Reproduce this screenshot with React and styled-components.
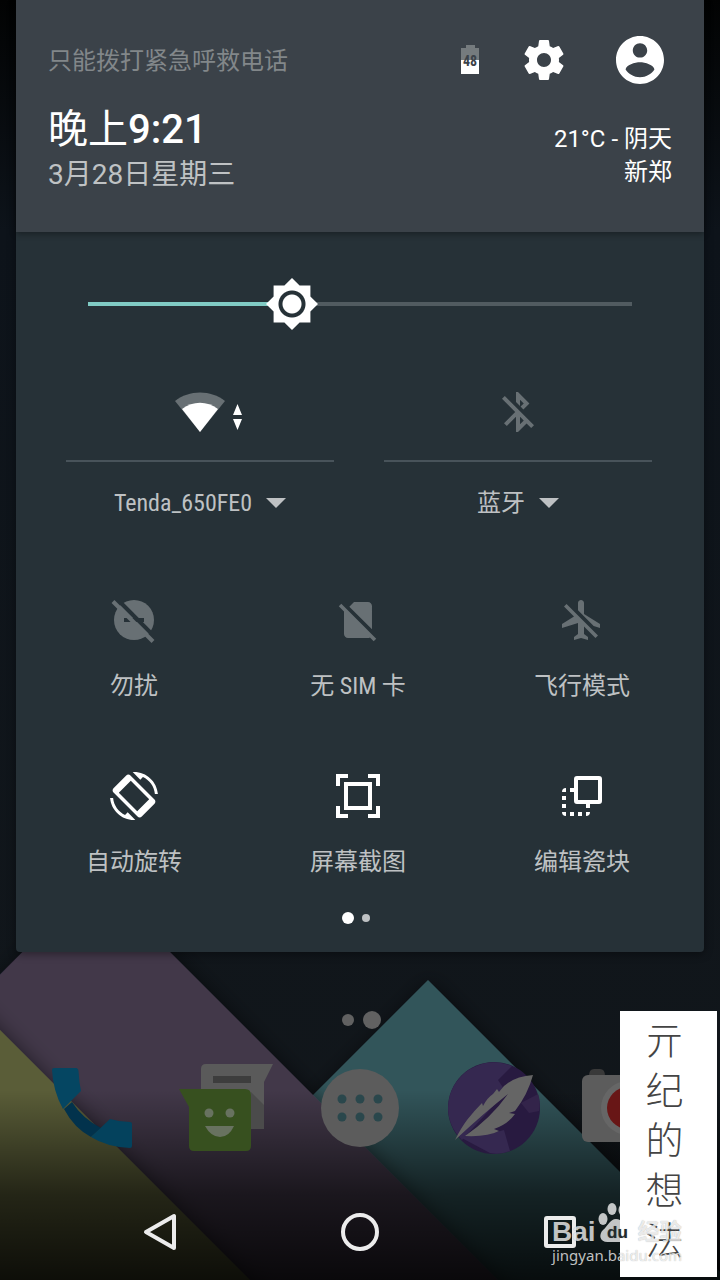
import React, { useState } from 'react';
import styled, { createGlobalStyle } from 'styled-components';

const GlobalStyle = createGlobalStyle`
  * {
    box-sizing: border-box;
  }

  body {
    margin: 0;
    background: #0b1014;
    font-family: Roboto, 'Noto Sans CJK SC', sans-serif;
    color: #fff;
  }

  button, input {
    font: inherit;
    color: inherit;
  }

  svg {
    display: block;
  }
`;

const Screen = styled.div`
  position: relative;
  display: flex;
  flex-direction: column;
  min-height: 100vh;
  overflow: hidden;
  isolation: isolate;
`;

const Wallpaper = styled.svg`
  position: absolute;
  inset: 0;
  z-index: -1;
  width: 100%;
  height: 100%;
`;

const IconButton = styled.button`
  display: flex;
  align-items: center;
  justify-content: center;
  padding: 0;
  border: 0;
  background: none;
  cursor: pointer;
`;

const Panel = styled.section`
  margin: 0 16px;
  background: #263137;
  border-radius: 0 0 4px 4px;
  box-shadow: 0 2px 8px rgba(0, 0, 0, 0.4);
`;

const Header = styled.header`
  position: relative;
  height: 232px;
  padding: 36px 32px 0;
  background: #3b4249;
  box-shadow: 0 2px 6px rgba(0, 0, 0, 0.35);
`;

const StatusRow = styled.div`
  display: flex;
  align-items: center;
  padding-right: 8px;
`;

const Carrier = styled.span`
  flex: 1;
  padding-top: 2px;
  font-size: 24px;
  line-height: 32px;
  color: #82878a;
`;

const StatusIcons = styled.div`
  display: flex;
  align-items: center;
  gap: 48px;
`;

const Battery = styled.svg`
  margin-right: -7px;
  font-family: 'Roboto Condensed', 'Liberation Sans Narrow', Roboto, sans-serif;
`;

const ClockRow = styled.div`
  display: flex;
  justify-content: space-between;
  margin-top: 22px;
`;

const Time = styled.div`
  font-size: 40px;
  font-weight: 500;
  line-height: 48px;

  span {
    font-weight: 400;
  }
`;

const DateText = styled.div`
  font-size: 28px;
  line-height: 42px;
  color: #bfc2c4;
`;

const Weather = styled.div`
  padding-top: 17px;
  font-size: 24px;
  line-height: 33px;
  text-align: right;
`;

const Brightness = styled.input`
  appearance: none;
  display: block;
  width: calc(100% - 92px);
  height: 52px;
  margin: 46px 46px 0;
  background: linear-gradient(to right, #80cbc4 ${props => props.$level}%, #515b60 ${props => props.$level}%)
    center / calc(100% - 52px) 4px no-repeat;
  cursor: pointer;

  &::-webkit-slider-thumb {
    appearance: none;
    width: 52px;
    height: 52px;
    background: radial-gradient(circle, #fff 9px, #263137 10px, #263137 13px, #fff 14px);
    clip-path: polygon(
      50% 0, 64.6% 14.6%, 85.4% 14.6%, 85.4% 35.4%, 100% 50%, 85.4% 64.6%, 85.4% 85.4%, 64.6% 85.4%,
      50% 100%, 35.4% 85.4%, 14.6% 85.4%, 14.6% 64.6%, 0 50%, 14.6% 35.4%, 14.6% 14.6%, 35.4% 14.6%
    );
  }
`;

const WideTiles = styled.div`
  display: grid;
  grid-template-columns: 1fr 1fr;
  gap: 50px;
  padding: 58px 52px 0 50px;
`;

const WideTile = styled.div`
  display: flex;
  flex-direction: column;
`;

const Toggle = styled(IconButton)`
  height: 74px;
  padding-bottom: 24px;
  border-bottom: 2px solid #48535a;
  color: ${props => (props.$on ? '#fff' : '#687074')};
`;

const DetailButton = styled(IconButton)`
  gap: 14px;
  height: 82px;
  font-family: 'Roboto Condensed', 'Liberation Sans Narrow', Roboto, 'Noto Sans CJK SC', sans-serif;
  font-size: 24px;
  line-height: 34px;
  color: #bec1c3;
`;

const TileGrid = styled.div`
  display: grid;
  grid-template-columns: repeat(3, 1fr);
  row-gap: 68px;
  padding: 52px 10px 0 6px;
`;

const Tile = styled(IconButton)`
  flex-direction: column;
  gap: 24px;
  font-family: 'Roboto Condensed', 'Liberation Sans Narrow', Roboto, 'Noto Sans CJK SC', sans-serif;
  font-size: 24px;
  line-height: 36px;
  color: #bec1c3;

  svg {
    color: ${props => (props.$on ? '#fff' : '#687074')};
  }
`;

const Pager = styled.div`
  display: flex;
  align-items: center;
  justify-content: center;
  gap: 8px;
  height: 12px;
  margin: 32px 8px 28px 0;
`;

const Dot = styled.span`
  width: ${props => props.$size}px;
  height: ${props => props.$size}px;
  border-radius: 50%;
  background: ${props => props.$color};
`;

const HomePager = styled(Pager)`
  gap: 9px;
  height: 18px;
  margin: 59px 0 31px;
  padding-left: 3px;
`;

const Dock = styled.nav`
  display: grid;
  grid-template-columns: repeat(5, 1fr);
  padding: 0 25px;
`;

const NavBar = styled.nav`
  display: grid;
  grid-template-columns: repeat(3, 1fr);
  height: 96px;
  margin-top: 28px;
  padding: 0 60px;
`;

const Note = styled.div`
  position: absolute;
  right: 3px;
  bottom: 3px;
  width: 97px;
  height: 266px;
  padding: 2px 8px 0 0;
  background: #fff;
  color: #444;
  font-family: 'Noto Sans CJK SC', sans-serif;
  font-size: 38px;
  font-weight: 300;
  line-height: 50px;
  text-align: center;

  span {
    display: block;
  }
`;

const Watermark = styled.div`
  position: absolute;
  right: 38px;
  bottom: 17px;
  color: rgba(255, 255, 255, 0.75);
  text-shadow: 0 0 1px rgba(0, 0, 0, 0.35);
`;

const Brand = styled.div`
  display: flex;
  align-items: flex-end;
  font-family: 'Liberation Sans', 'Noto Sans CJK SC', sans-serif;
  font-size: 28px;
  font-weight: 700;
  line-height: 30px;

  svg {
    margin: 0 2px 4px;
  }

  span:last-child {
    font-size: 22px;
  }
`;

const Site = styled.div`
  font-family: 'Noto Sans', sans-serif;
  font-size: 15px;
  line-height: 16px;
`;

const Glyph = ({ d, size = 48, viewBox = '0 0 24 24' }) => (
  <svg width={size} height={size} viewBox={viewBox} fill="currentColor" aria-hidden="true">
    <path d={d} />
  </svg>
);

const paths = {
  settings:
    'M19.43 12.98c.04-.32.07-.64.07-.98s-.03-.66-.07-.98l2.11-1.65c.19-.15.24-.42.12-.64l-2-3.46c-.12-.22-.39-.3-.61-.22l-2.49 1c-.52-.4-1.08-.73-1.69-.98l-.38-2.65C14.46 2.18 14.25 2 14 2h-4c-.25 0-.46.18-.49.42l-.38 2.65c-.61.25-1.17.59-1.69.98l-2.49-1c-.23-.09-.49 0-.61.22l-2 3.46c-.13.22-.07.49.12.64l2.11 1.65c-.04.32-.07.65-.07.98s.03.66.07.98l-2.11 1.65c-.19.15-.24.42-.12.64l2 3.46c.12.22.39.3.61.22l2.49-1c.52.4 1.08.73 1.69.98l.38 2.65c.03.24.24.42.49.42h4c.25 0 .46-.18.49-.42l.38-2.65c.61-.25 1.17-.59 1.69-.98l2.49 1c.23.09.49 0 .61-.22l2-3.46c.12-.22.07-.49-.12-.64l-2.11-1.65zM12 15.5c-1.93 0-3.5-1.57-3.5-3.5s1.57-3.5 3.5-3.5 3.5 1.57 3.5 3.5-1.57 3.5-3.5 3.5z',
  account:
    'M12 2C6.48 2 2 6.48 2 12s4.48 10 10 10 10-4.48 10-10S17.52 2 12 2zm0 3c1.66 0 3 1.34 3 3s-1.34 3-3 3-3-1.34-3-3 1.34-3 3-3zm0 14.2c-2.5 0-4.71-1.28-6-3.22.03-1.99 4-3.08 6-3.08 1.99 0 5.97 1.09 6 3.08-1.29 1.94-3.5 3.22-6 3.22z',
  bluetoothOff:
    'M13 5.83l1.88 1.88-1.6 1.6 1.41 1.41 3.02-3.02L12 2h-1v5.03l2 2v-3.2zM5.41 4L4 5.41 10.59 12 5 17.59 6.41 19 11 14.41V22h1l4.29-4.29 2.3 2.29L20 18.59 5.41 4zM13 18.17v-3.76l1.88 1.88L13 18.17z',
  noSim:
    'M18.99 5c0-1.1-.89-2-1.99-2h-7L7.66 5.34 19 16.68 18.99 5zM3.65 3.88L2.38 5.15 5 7.77V19c0 1.1.9 2 2 2h10.01c.35 0 .67-.1.96-.26l1.88 1.88 1.27-1.27L3.65 3.88z',
  airplaneOff:
    'M13 9V3.5c0-.83-.67-1.5-1.5-1.5S10 2.67 10 3.5v3.68l7.83 7.83L21 16v-2l-8-5zM3 5.27l4.99 4.99L2 14v2l8-2.5V19l-2 1.5V22l3.5-1 3.5 1v-1.5L13 19v-3.73L18.73 21 20 19.73 4.27 4 3 5.27z',
  rotate:
    'M16.48 2.52c3.27 1.55 5.61 4.72 5.97 8.48h1.5C23.44 4.84 18.29 0 12 0l-.66.03 3.81 3.81 1.33-1.32zm-6.25-.77c-.59-.59-1.54-.59-2.12 0L1.75 8.11c-.59.59-.59 1.54 0 2.12l12.02 12.02c.59.59 1.54.59 2.12 0l6.36-6.36c.59-.59.59-1.54 0-2.12L10.23 1.75zM13.6 19.6L4.4 10.4l6-6 9.2 9.2-6 6zm-6.080 1.88C4.25 19.94 1.91 16.76 1.55 13H.05C.56 19.16 5.71 24 12 24l.66-.03-3.81-3.81-1.33 1.32z',
};

const DndOff = () => (
  <svg width="48" height="48" viewBox="0 0 48 48" aria-hidden="true">
    <mask id="dnd-cut">
      <rect width="48" height="48" fill="#fff" />
      <rect x="14" y="22" width="20" height="4" fill="#000" />
      <path d="M6 2L48 44" stroke="#000" strokeWidth="4" />
    </mask>
    <circle cx="24" cy="24" r="20" fill="currentColor" mask="url(#dnd-cut)" />
    <path d="M3 5.500L43 45.500" stroke="currentColor" strokeWidth="4" />
  </svg>
);

const Screenshot = () => (
  <svg width="48" height="48" viewBox="0 0 48 48" fill="none" stroke="currentColor" strokeWidth="4" aria-hidden="true">
    <path d="M4 14V4h10M34 4h10v10M44 34v10H34M14 44H4V34M12 12h24v24H12z" />
  </svg>
);

const EditTiles = () => (
  <svg width="48" height="48" viewBox="0 0 48 48" fill="currentColor" aria-hidden="true">
    <rect x="18" y="6" width="24" height="24" rx="1" fill="none" stroke="currentColor" strokeWidth="4" />
    <path d="M4 20a4 4 0 0 1 4-4v4zM12 16h4v4h-4zM4 24h4v4H4zM4 32h4v4H4zM4 40h4v4a4 4 0 0 1-4-4zM12 40h4v4h-4zM20 40h4v4h-4zM28 40h4a4 4 0 0 1-4 4zM28 32h4v4h-4z" />
  </svg>
);

const Wifi = () => (
  <svg width="90" height="48" viewBox="-5 0 90 48" fill="currentColor" aria-hidden="true">
    <path d="M15 13C29 1.500 51 1.500 65 13L40 44z" fill="#687074" />
    <path d="M22 21C33 12.700 47 12.700 58 21L40 44z" />
    <path d="M73 27l4.500-11 4.500 11zM73 31l4.500 11 4.500-11z" />
  </svg>
);

const Caret = () => (
  <svg width="20" height="10" viewBox="0 0 20 10" fill="currentColor" aria-hidden="true">
    <path d="M0 0h20L10 10z" />
  </svg>
);

const PhoneIcon = () => (
  <svg width="96" height="96" viewBox="0 0 96 96" aria-hidden="true">
    <path d="M20 49L28 42Q38 58 57 68L47 77Q30 68 20 49z" fill="#02324c" />
    <path d="M8 10Q8 8 10 8H32Q34 8 34.500 11Q35 22 37 31L19 49Q9 31 8 10z" fill="#054662" />
    <path d="M47 77L66 59Q76 62 86 62Q88 62 88 64V86Q88 88 86 88Q63 87 47 77z" fill="#04425d" />
  </svg>
);

const MessengerIcon = () => (
  <svg width="96" height="96" viewBox="0 0 96 96" aria-hidden="true">
    <path d="M23 9Q23 4 28 4H95L86 22V63Q86 69 80 69H23z" fill="#5a5a5a" />
    <rect x="35" y="16" width="38" height="7" fill="#3d3d3d" />
    <path d="M73 32L86 45V69H73z" fill="#4b4b4b" />
    <path d="M1 29H67Q73 29 73 35V86Q73 91 68 91H16Q11 91 11 86V47z" fill="#37501f" />
    <circle cx="31" cy="53" r="4.500" fill="#687260" />
    <circle cx="52" cy="53" r="4.500" fill="#687260" />
    <path d="M27 66H56Q51 77 42 77T27 66z" fill="#687260" />
  </svg>
);

const AppsIcon = () => (
  <svg width="96" height="96" viewBox="0 0 96 96" aria-hidden="true">
    <circle cx="48" cy="48" r="39" fill="#5c5c5c" />
    {[39, 57].map(y => [30, 48, 66].map(x => <circle key={`${x}-${y}`} cx={x} cy={y} r="4.500" fill="#2a474c" />))}
  </svg>
);

const BrowserIcon = () => (
  <svg width="96" height="96" viewBox="0 0 96 96" aria-hidden="true">
    <circle cx="48" cy="48" r="46" fill="#281a40" />
    <path d="M2 48A46 46 0 0 1 66 6L52 20L60 32L16 80A46 46 0 0 1 2 48z" fill="#352850" />
    <path d="M43 74L58 70L64 91Q54 95 44 93L12 76z" fill="#352850" />
    <path d="M75 43L92 34Q95 42 93 51L83 53z" fill="#33244a" />
    <path d="M9 80Q15 68 21 60Q28 51 36 43L37 46Q41 38 47 34L51 29L53 32Q63 17 87 15Q82 34 69 51L63 53L69 54Q62 64 48 69L53 71Q42 77 19 76Q45 58 62 34Q38 53 9 80z" fill="#656565" />
  </svg>
);

const CameraIcon = () => (
  <svg width="96" height="96" viewBox="0 0 96 96" aria-hidden="true">
    <path d="M9 16Q9 9 14 9H20Q25 9 25 16z" fill="#393939" />
    <rect x="2" y="15" width="92" height="67" rx="6" fill="#5c5c5c" />
    <circle cx="48" cy="48" r="27" fill="#666" />
    <circle cx="48" cy="48" r="21" fill="#681616" />
  </svg>
);

const Paw = () => (
  <svg width="38" height="40" viewBox="0 0 38 40" fill="currentColor" aria-hidden="true">
    <ellipse cx="5" cy="16" rx="4.500" ry="6" />
    <ellipse cx="14" cy="6" rx="4.500" ry="6" />
    <ellipse cx="25" cy="7" rx="4.500" ry="6" />
    <ellipse cx="33" cy="18" rx="4.500" ry="6" />
    <path d="M18 16C24 16 26 22 30 26C36 32 32 40 24 39H11C2 40 0 32 5 27C10 23 12 16 18 16z" />
    <text x="9" y="35" fontSize="17" fontWeight="700" fill="#222a2c">du</text>
  </svg>
);

const tiles = [
  { label: '勿扰', icon: <DndOff /> },
  { label: '无 SIM 卡', icon: <Glyph d={paths.noSim} /> },
  { label: '飞行模式', icon: <Glyph d={paths.airplaneOff} /> },
  { label: '自动旋转', icon: <Glyph d={paths.rotate} />, on: true },
  { label: '屏幕截图', icon: <Screenshot />, on: true },
  { label: '编辑瓷块', icon: <EditTiles />, on: true },
];

const dockApps = [
  { name: '电话', icon: <PhoneIcon /> },
  { name: '短信', icon: <MessengerIcon /> },
  { name: '应用', icon: <AppsIcon /> },
  { name: '浏览器', icon: <BrowserIcon /> },
  { name: '相机', icon: <CameraIcon /> },
];

const App = () => {
  const [level, setLevel] = useState(37.5);

  return (
    <Screen>
      <GlobalStyle />
      <Wallpaper viewBox="0 0 720 1280" preserveAspectRatio="xMidYMax slice" aria-hidden="true">
        <defs>
          <linearGradient id="sky" x1="0" y1="0" x2="0" y2="1">
            <stop offset="0" stopColor="#020303" />
            <stop offset="0.18" stopColor="#0d131a" />
            <stop offset="1" stopColor="#12171b" />
          </linearGradient>
          <linearGradient id="scrim" x1="0" y1="0" x2="0" y2="1">
            <stop offset="0" stopColor="#000" stopOpacity="0" />
            <stop offset="0.55" stopColor="#000" stopOpacity="0.6" />
            <stop offset="1" stopColor="#000" stopOpacity="0.85" />
          </linearGradient>
          <filter id="edge" x="-20%" y="-20%" width="140%" height="140%">
            <feDropShadow dx="2" dy="2" stdDeviation="10" floodColor="#000" floodOpacity="0.5" />
          </filter>
        </defs>
        <rect width="720" height="1280" fill="url(#sky)" />
        <path d="M428 980L50 1358H806z" fill="#30545a" filter="url(#edge)" />
        <path d="M-100 1075L96 878L598 1380H-100z" fill="#42374a" filter="url(#edge)" />
        <path d="M-60 970L350 1380H-60z" fill="#5a5d38" filter="url(#edge)" />
        <rect y="1090" width="720" height="190" fill="url(#scrim)" />
      </Wallpaper>

      <Panel>
        <Header>
          <StatusRow>
            <Carrier>只能拨打紧急呼救电话</Carrier>
            <StatusIcons>
              <Battery width="18" height="30" viewBox="0 0 18 30" role="img" aria-label="48%">
                <path d="M5 0h9v3h4v12H0V3h5z" fill="#757b7e" />
                <path d="M0 15h18v14H0z" fill="#fff" />
                <text x="9" y="21" textAnchor="middle" fontSize="14" fontWeight="700" fill="#3b4249">48</text>
              </Battery>
              <IconButton aria-label="设置">
                <Glyph d={paths.settings} />
              </IconButton>
              <IconButton aria-label="用户">
                <Glyph d={paths.account} viewBox="2 2 20 20" />
              </IconButton>
            </StatusIcons>
          </StatusRow>
          <ClockRow>
            <div>
              <Time><span>晚上</span>9:21</Time>
              <DateText>3月28日星期三</DateText>
            </div>
            <Weather>
              <div>21°C - 阴天</div>
              <div>新郑</div>
            </Weather>
          </ClockRow>
        </Header>

        <Brightness
          type="range"
          min="0"
          max="100"
          step="0.5"
          value={level}
          $level={level}
          onChange={e => setLevel(Number(e.target.value))}
          aria-label="亮度"
        />

        <WideTiles>
          <WideTile>
            <Toggle $on aria-label="WLAN"><Wifi /></Toggle>
            <DetailButton>Tenda_650FE0<Caret /></DetailButton>
          </WideTile>
          <WideTile>
            <Toggle aria-label="蓝牙"><Glyph d={paths.bluetoothOff} /></Toggle>
            <DetailButton>蓝牙<Caret /></DetailButton>
          </WideTile>
        </WideTiles>

        <TileGrid>
          {tiles.map(tile => (
            <Tile key={tile.label} $on={tile.on}>
              {tile.icon}
              {tile.label}
            </Tile>
          ))}
        </TileGrid>

        <Pager>
          <Dot $size={12} $color="#fff" />
          <Dot $size={8} $color="#bec1c3" />
        </Pager>
      </Panel>

      <HomePager>
        <Dot $size={12} $color="#616161" />
        <Dot $size={18} $color="#616161" />
      </HomePager>

      <Dock>
        {dockApps.map(app => (
          <IconButton key={app.name} aria-label={app.name}>{app.icon}</IconButton>
        ))}
      </Dock>

      <NavBar>
        <IconButton aria-label="返回">
          <svg width="40" height="40" viewBox="0 0 40 40" fill="none" stroke="#ececec" strokeWidth="4" strokeLinejoin="round">
            <path d="M34 4V36L6 20z" />
          </svg>
        </IconButton>
        <IconButton aria-label="主屏幕">
          <svg width="40" height="40" viewBox="0 0 40 40" fill="none" stroke="#ececec" strokeWidth="4">
            <circle cx="20" cy="20" r="17" />
          </svg>
        </IconButton>
        <IconButton aria-label="概览">
          <svg width="40" height="40" viewBox="0 0 40 40" fill="none" stroke="#ececec" strokeWidth="4">
            <rect x="6" y="6" width="28" height="28" rx="1" />
          </svg>
        </IconButton>
      </NavBar>

      <Note>
        {[...'亓纪的想法'].map(char => <span key={char}>{char}</span>)}
      </Note>
      <Watermark>
        <Brand>
          <span>Bai</span>
          <Paw />
          <span>经验</span>
        </Brand>
        <Site>jingyan.baidu.com</Site>
      </Watermark>
    </Screen>
  );
};

export default App;
